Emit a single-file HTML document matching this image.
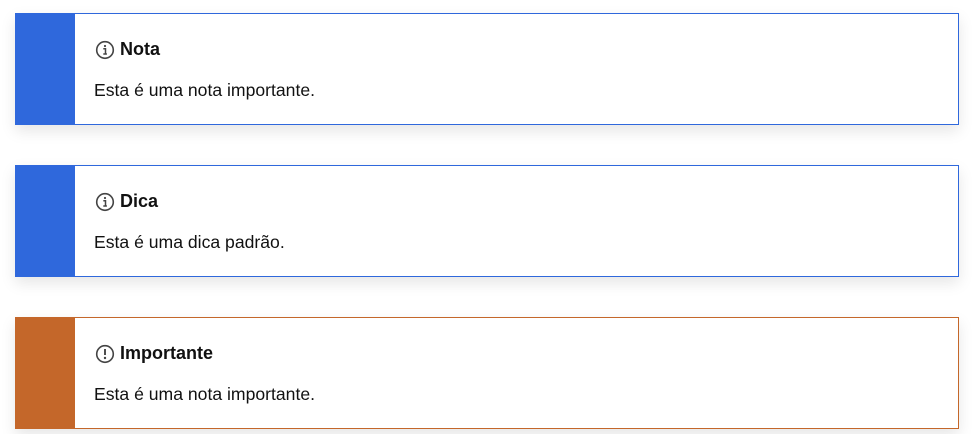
<!DOCTYPE html>
<html><head><style>
body{margin:0;background:#fff;font-family:"Liberation Sans",sans-serif;width:972px;height:434px;overflow:hidden;position:relative}
.b{position:absolute;left:15px;width:942px;height:110px;border:1px solid #2f68dc;box-shadow:0 6px 14px rgba(0,0,0,0.10);background:#fff}
.b .bar{position:absolute;left:-1px;top:-1px;width:60px;height:112px;background:#2f68dc}
.o{border-color:#c4672a}.o .bar{background:#c4672a}
.t{position:absolute;left:79px;top:25px;font-size:18px;font-weight:bold;color:#111;display:flex;align-items:center;gap:5px}
.t svg{width:20px;height:20px}
.p{position:absolute;left:78px;top:66px;font-size:17.6px;color:#111}
</style></head><body>
<div class="b" style="top:13px"><div class="bar"></div>
<div class="t"><svg viewBox="0 0 20 20"><circle cx="10" cy="10" r="8.3" fill="none" stroke="#444" stroke-width="1.6"/><circle cx="10" cy="6" r="1.1" fill="#444"/><path d="M8.3 8.7h2.2v5.2M8.3 14h3.6" stroke="#444" stroke-width="1.5" fill="none"/></svg>Nota</div>
<div class="p">Esta é uma nota importante.</div></div>
<div class="b" style="top:165px"><div class="bar"></div>
<div class="t"><svg viewBox="0 0 20 20"><circle cx="10" cy="10" r="8.3" fill="none" stroke="#444" stroke-width="1.6"/><circle cx="10" cy="6" r="1.1" fill="#444"/><path d="M8.3 8.7h2.2v5.2M8.3 14h3.6" stroke="#444" stroke-width="1.5" fill="none"/></svg>Dica</div>
<div class="p">Esta é uma dica padrão.</div></div>
<div class="b o" style="top:317px"><div class="bar"></div>
<div class="t"><svg viewBox="0 0 20 20"><circle cx="10" cy="10" r="8.3" fill="none" stroke="#444" stroke-width="1.6"/><path d="M10 5v6" stroke="#444" stroke-width="1.9" fill="none"/><circle cx="10" cy="14" r="1.2" fill="#444"/></svg>Importante</div>
<div class="p">Esta é uma nota importante.</div></div>
</body></html>
